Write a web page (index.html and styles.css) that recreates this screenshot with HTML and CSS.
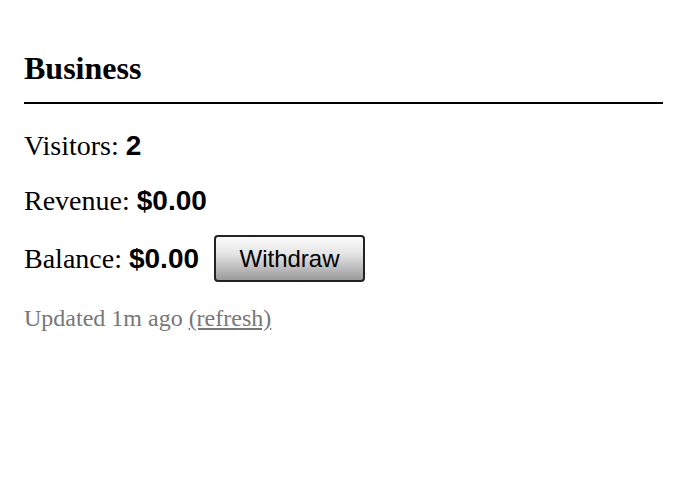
FILE: index.html
```html
<!DOCTYPE html>
<html>
<head>
<meta charset="utf-8">
<link rel="stylesheet" href="styles.css">
</head>
<body>
<div class="panel">
  <h2 class="title">Business</h2>
  <div class="row first">Visitors: <b class="num">2</b></div>
  <div class="row">Revenue: <b class="num">$0.00</b></div>
  <div class="row balance">Balance: <b class="num">$0.00</b> <button class="btn">Withdraw</button></div>
  <div class="muted">Updated 1m ago <a class="link" href="#">(refresh)</a></div>
</div>
</body>
</html>
```
FILE: styles.css
```css
html, body { margin: 0; padding: 0; background: #fff; }
.panel {
  padding: 40px 16px 0 24px;
  font-family: "Liberation Serif", serif;
  color: #000;
}
.title {
  margin: 0;
  font-size: 32px;
  font-weight: bold;
  line-height: 56px;
  border-bottom: 2px solid #000;
  padding-bottom: 6px;
}
.row {
  font-size: 28px;
  line-height: 32px;
  margin-top: 23px;
  display: flex;
  align-items: center;
}
.row.first { margin-top: 26px; }
.row.balance { margin-top: 18px; }
.num {
  font-family: "Liberation Sans", sans-serif;
  font-weight: bold;
  margin-left: 7px;
}
.btn {
  margin-left: 15px;
  width: 151px;
  height: 47px;
  font-family: "Liberation Sans", sans-serif;
  font-size: 24px;
  color: #000;
  border: 2px solid #222;
  border-radius: 4px;
  background: linear-gradient(#fbfbfb, #e4e4e4 40%, #9a9a9a);
  padding: 0;
}
.muted {
  font-size: 24px;
  line-height: 28px;
  color: #777;
  margin-top: 22px;
}
.link { color: #777; }
```
